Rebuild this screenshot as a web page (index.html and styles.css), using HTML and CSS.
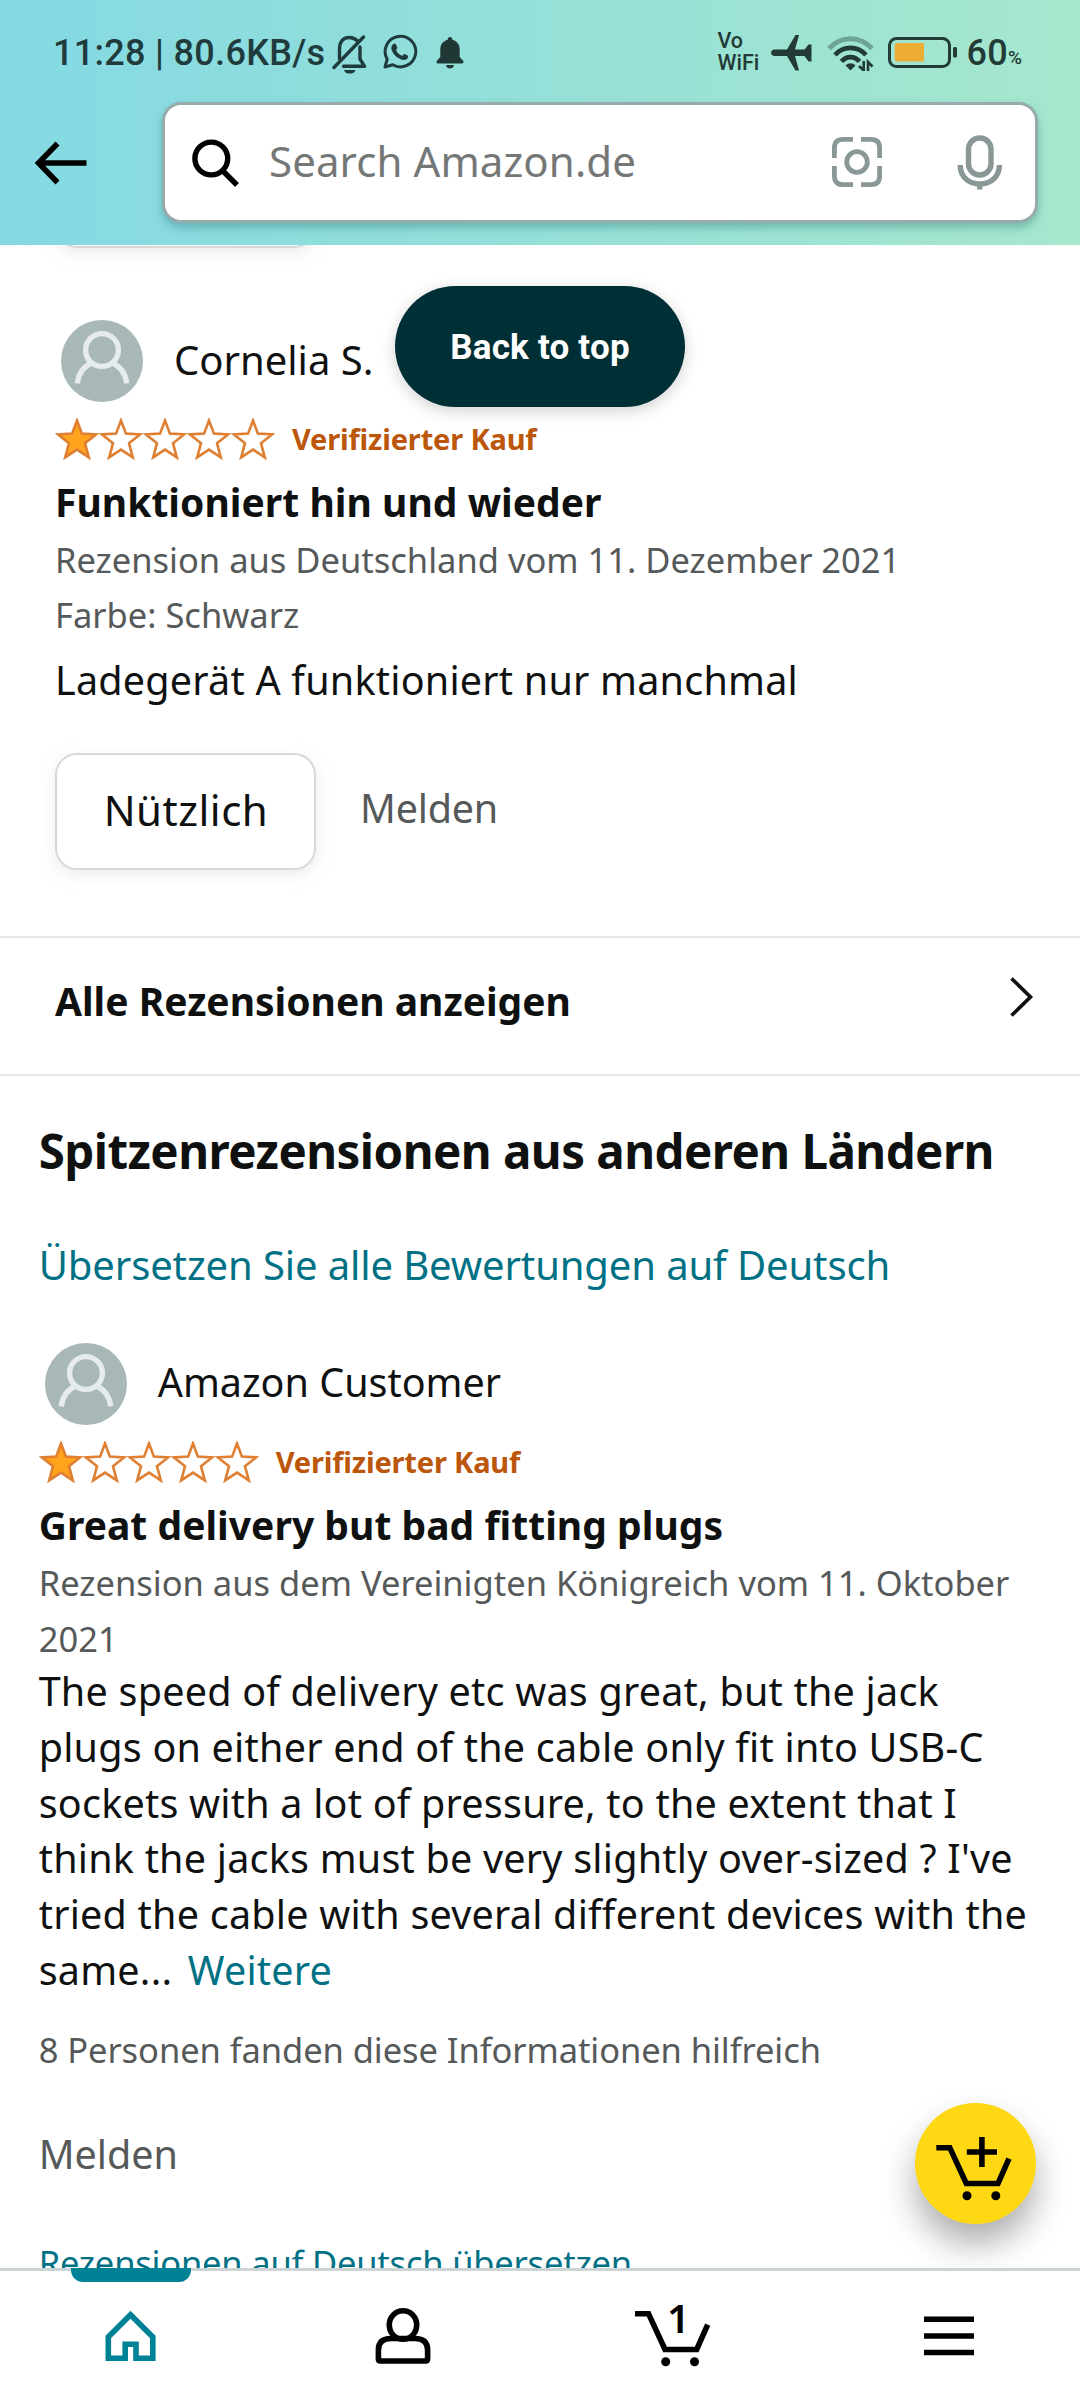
FILE: index.html
```
<!DOCTYPE html>
<html lang="de">
<head>
<meta charset="utf-8">
<title>Rezensionen</title>
<link rel="stylesheet" href="styles.css">
</head>
<body>
<svg class="defs" width="0" height="0" aria-hidden="true">
  <symbol id="avatar" viewBox="0 0 82 82">
    <circle cx="41" cy="41" r="41" fill="#a8b7b7"/>
    <g fill="none" stroke="#e6ecec" stroke-width="5.4">
      <circle cx="41" cy="30" r="16.4"/>
      <path d="M16.3 63.3C17.5 54 22.5 46.500 30.500 43M65.700 63.300C64.500 54 59.500 46.500 51.500 43"/>
    </g>
  </symbol>
  <symbol id="star" viewBox="0 0 44 42">
    <path d="M22 2.500L26.900 15.600L41 16.400L30 25.200L33.800 39.400L22 31.600L10.200 39.400L14 25.200L3 16.400L17.100 15.600Z" stroke="#de7f32" stroke-width="2.600"/>
  </symbol>
  <symbol id="cart" viewBox="0 0 121 121">
    <path d="M21.300 44.700H34.800L51.300 80.500H83L94 55.700" fill="none" stroke="#000" stroke-width="5.600"/>
    <circle cx="52" cy="92.700" r="4.500"/><circle cx="80.800" cy="92.700" r="4.500"/>
  </symbol>
</svg>

<div class="screen">
  <header class="header">
    <div class="status">
      <span class="status-text">11:28 | 80.6KB/s</span>
      <svg class="i-mute" width="36" height="40" viewBox="0 0 36 40" fill="none" stroke="#1f3b3c" stroke-width="3.400">
        <path d="M7.500 22V15C7.500 7 12 3.500 17.500 3.500C20.500 3.500 23 4.500 25 6.500M28 13V25L32.500 32.300H11.500M31.500 3L2 33.500M7.500 18V25" stroke-linecap="round" stroke-linejoin="round"/>
        <path d="M12 36H23.500C22.500 39 20 39.500 17.800 39.500S13 39 12 36Z" fill="#1f3b3c" stroke="none"/>
      </svg>
      <svg class="i-wa" width="36" height="36" viewBox="0 0 36 36">
        <path d="M3 33L5.200 25.200A15.300 15.300 0 1 1 10.800 30.800Z" fill="none" stroke="#1f3b3c" stroke-width="3" stroke-linejoin="round"/>
        <path d="M11.500 10C13 9 14 10 14.500 11.500L15.300 13.700C15.300 15 13.800 15.600 14.200 16.500C15.500 19 17.300 20.700 20 21.700C21 22 21.600 19.800 22.800 20L26 21.800C26.700 23.500 25 25.800 22.500 26C16 26 9.500 19 9.300 14C9.300 12 10.200 10.700 11.500 10Z" fill="#1f3b3c"/>
      </svg>
      <svg class="i-bell" width="28" height="32" viewBox="0 0 28 32" fill="#1f3735">
        <path d="M14 0C15.500 0 16.300 1 16.300 2.700C21 4 23.700 7.500 23.700 12.500V20L27.300 24C28 25.500 27 26.500 26 26.500H2C1 26.500 0 25.500 .7 24L4.300 20V12.500C4.300 7.500 7 4 11.700 2.700C11.700 1 12.500 0 14 0ZM10 28H18C17.700 30.500 16 31.500 14 31.500S10.300 30.500 10 28Z"/>
      </svg>
      <span class="spacer"></span>
      <span class="vowifi"><span>Vo</span><span>WiFi</span></span>
      <svg class="i-plane" width="41" height="38" viewBox="0 0 41 38" fill="#223b36">
        <path d="M3 15.500H16L24.500 1H28L24 15.500H33.500L37.500 10.500H40.500V27.500H37.500L33.500 22H24L28 36.500H24.500L16 22H3C-1 21.500-1 16 3 15.500Z"/>
      </svg>
      <svg class="i-wifi" width="47" height="36" viewBox="0 0 47 36" fill="none" stroke="#223b36" stroke-width="4.800">
        <path d="M2 13.500C14 .5 33 .5 45 13.500" stroke="#6fa596"/>
        <path d="M8 20C16.500 10.500 30.500 10.500 39 20M14.500 26.500C19.500 20.700 27.500 20.700 32.500 26.500"/>
        <path d="M18.500 30.500C21.500 27.500 25.500 27.500 28.500 30.500L23.500 35.500Z" fill="#223b36" stroke="none"/>
        <path d="M36.700 26V35.500L32 31M41 36V27L45.500 31.500" stroke-width="2.600"/>
      </svg>
      <svg class="i-battery" width="70" height="31" viewBox="0 0 70 31">
        <rect x="1.500" y="1.500" width="60" height="28" rx="7" fill="none" stroke="#223b36" stroke-width="3"/>
        <path d="M9.500 6H36V24.500H9.500Q6.700 24.500 6.700 22V8.500Q6.700 6 9.500 6Z" fill="#edad34"/>
        <rect x="65" y="10" width="4" height="10.500" rx="1.500" fill="#223b36"/>
      </svg>
      <span class="pct-num">60</span><span class="pct-sign">%</span>
    </div>
    <div class="search-row">
      <svg class="i-back" width="54" height="44" viewBox="0 0 54 44" fill="none" stroke="#000" stroke-width="5.500">
        <path d="M52.500 22H5M23.500 2.500L4.500 22L23.500 41.500"/>
      </svg>
      <div class="search-box">
        <svg width="48" height="48" viewBox="0 0 48 48" fill="none" stroke="#000" stroke-width="5.400">
          <circle cx="19.300" cy="19.500" r="16.400"/><path d="M31 32L45 46"/>
        </svg>
        <span class="placeholder">Search Amazon.de</span>
        <svg class="i-cam" width="50" height="50" viewBox="0 0 50 50" fill="none" stroke="#8a9797" stroke-width="4.800">
          <path d="M2.400 21V11Q2.400 2.400 11 2.400H21M29 2.400H39Q47.600 2.400 47.600 11V21M47.600 29V39Q47.600 47.600 39 47.600H29M21 47.600H11Q2.400 47.600 2.400 39V29"/>
          <circle cx="25" cy="25" r="10.300"/>
        </svg>
        <svg class="i-mic" width="46" height="55" viewBox="0 0 46 55" fill="none" stroke="#8a9797" stroke-width="5.400">
          <rect x="11.500" y="3" width="22.500" height="37" rx="11.200"/>
          <path d="M3.200 30C3.200 42 12 49 22.800 49S42.400 42 42.400 30M22.800 49V54.500"/>
        </svg>
      </div>
    </div>
  </header>

  <main class="content">
    <div class="button prev-button"></div>
    <article class="review local">
      <div class="profile"><svg width="82" height="82"><use href="#avatar"/></svg><span>Cornelia S.</span></div>
      <div class="rating">
        <svg width="220" height="42" fill="none"><use href="#star" x="0" width="44" height="42" fill="#ffa41c"/><use href="#star" x="44" width="44" height="42"/><use href="#star" x="88" width="44" height="42"/><use href="#star" x="132" width="44" height="42"/><use href="#star" x="176" width="44" height="42"/></svg>
        <b class="verified">Verifizierter Kauf</b>
      </div>
      <h3 class="title">Funktioniert hin und wieder</h3>
      <p class="meta">Rezension aus Deutschland vom 11. Dezember 2021</p>
      <p class="meta color-line">Farbe: Schwarz</p>
      <p class="body short">Ladegerät A funktioniert nur manchmal</p>
      <div class="actions"><div class="button">Nützlich</div><span class="report">Melden</span></div>
    </article>

    <div class="all-link">
      <b>Alle Rezensionen anzeigen</b>
      <svg width="24" height="40" viewBox="0 0 24 40" fill="none" stroke="#0f1111" stroke-width="3.600"><path d="M1.500 1.500L20.500 20L1.500 38.500"/></svg>
    </div>

    <section class="foreign">
      <h2>Spitzenrezensionen aus anderen Ländern</h2>
      <a class="translate-all">Übersetzen Sie alle Bewertungen auf Deutsch</a>
      <article class="review">
        <div class="profile"><svg width="82" height="82"><use href="#avatar"/></svg><span class="customer">Amazon Customer</span></div>
        <div class="rating">
          <svg width="220" height="42" fill="none"><use href="#star" x="0" width="44" height="42" fill="#ffa41c"/><use href="#star" x="44" width="44" height="42"/><use href="#star" x="88" width="44" height="42"/><use href="#star" x="132" width="44" height="42"/><use href="#star" x="176" width="44" height="42"/></svg>
          <b class="verified">Verifizierter Kauf</b>
        </div>
        <h3 class="title">Great delivery but bad fitting plugs</h3>
        <p class="meta">Rezension aus dem Vereinigten Königreich vom 11. Oktober<br>2021</p>
        <p class="body">The speed of delivery etc was great, but the jack<br>plugs on either end of the cable only fit into USB-C<br>sockets with a lot of pressure, to the extent that I<br>think the jacks must be very slightly over-sized ? I've<br>tried the cable with several different devices with the<br>same... <a class="more">Weitere</a></p>
        <p class="helpful">8 Personen fanden diese Informationen hilfreich</p>
        <p class="report-line">Melden</p>
        <a class="translate">Rezensionen auf Deutsch übersetzen</a>
      </article>
    </section>
  </main>

  <nav class="tabs">
    <div class="tab active">
      <svg width="120" height="132" viewBox="0 0 120 132" fill="none" stroke="#008296" stroke-width="5.600">
        <path d="M59.500 46.800L37.300 69V90.200H54.200V76.200H65V90.200H81.800V69Z"/>
      </svg>
    </div>
    <div class="tab">
      <svg width="120" height="132" viewBox="0 0 120 132" fill="none" stroke="#000" stroke-width="5.600">
        <ellipse cx="59" cy="57" rx="13.700" ry="14.300"/>
        <path d="M47 70.500H71Q83.600 70.500 83.600 82V91Q83.600 93 81.600 93H36.400Q34.400 93 34.400 91V82Q34.400 70.500 47 70.500Z"/>
      </svg>
    </div>
    <div class="tab">
      <svg width="120" height="132" viewBox="0 0 120 132"><use href="#cart" x="-2.300" y="1" width="121" height="121"/></svg>
      <b class="cart-count">1</b>
    </div>
    <div class="tab">
      <svg width="120" height="132" viewBox="0 0 120 132" stroke="#000" stroke-width="5.600"><path d="M35 51.300H85M35 68H85M35 84.500H85"/></svg>
    </div>
  </nav>

  <div class="to-top">Back to top</div>
  <div class="fab">
    <svg width="121" height="121" viewBox="0 0 121 121"><use href="#cart" width="121" height="121"/><path d="M51.800 49H82M66.900 34V64" stroke="#000" stroke-width="5.600"/></svg>
  </div>
</div>
</body>
</html>
```
FILE: styles.css
```
* { box-sizing: border-box; }
body, p, h2, h3 { margin: 0; }
svg { display: block; flex: none; }
.defs { position: absolute; }

.screen {
  position: relative;
  display: flex;
  flex-direction: column;
  width: 1080px;
  height: 2400px;
  overflow: hidden;
  background: #fff;
  color: #0f1111;
  font-family: "Noto Sans", sans-serif;
  font-size: 39px;
  white-space: nowrap;
}

/* header */
.header {
  flex: none;
  height: 245px;
  background: linear-gradient(to right, #84d9e3, #a6e7cd);
}
.status {
  display: flex;
  align-items: flex-start;
  height: 102px;
  padding: 34px 58px 0 53px;
  font-family: Roboto, sans-serif;
  font-weight: 500;
  font-size: 36px;
  line-height: 38px;
  color: #1f3b3c;
}
.status-text { width: 279px; letter-spacing: 0.3px; }
.i-wa { margin: 0 0 0 14px; }
.i-bell { margin: 3px 0 0 18px; }
.spacer { flex: 1; }
.vowifi {
  display: flex;
  flex-direction: column;
  width: 54px;
  margin-top: -4px;
  font-size: 21.500px;
  font-weight: 500;
  line-height: 21.500px;
  color: #223b36;
}
.i-wifi { margin: 1px 0 0 15px; }
.i-battery { margin: 3px 0 0 14px; }
.pct-num { margin-left: 8px; color: #223b36; letter-spacing: 0.3px; }
.pct-sign { width: 14px; margin: 5px 0 0 0; font-size: 19px; color: #223b36; }

.search-row { display: flex; align-items: center; height: 121px; padding: 0 42px 0 34px; }
.i-back { margin-right: 74px; }
.search-box {
  flex: 1;
  display: flex;
  align-items: center;
  height: 121px;
  padding: 0 32.500px 0 27px;
  border: 3px solid #97abad;
  border-radius: 19px;
  background: #fff;
  box-shadow: 0 5px 9px rgba(30, 110, 110, 0.35);
}
.placeholder {
  flex: 1;
  margin-left: 29px;
  padding-bottom: 4px;
  font-size: 42px;
  letter-spacing: 0.1px;
  color: #757777;
}
.i-cam { margin-bottom: 1px; }
.i-mic { margin-left: 74.500px; }

/* content */
.content { flex: 1; min-height: 0; overflow: hidden; }
.button {
  width: 261px;
  height: 117px;
  padding: 0 0 4px 1px;
  border: 2px solid #d5d9d9;
  border-radius: 22px;
  background: #fff;
  box-shadow: 0 5px 14px rgba(213, 217, 217, 0.5);
  font-size: 42px;
  line-height: 110px;
  letter-spacing: 0.5px;
  text-align: center;
}
.prev-button { margin: -114px 0 0 55px; }

.local { padding: 72px 0 0 55px; }
.profile { display: flex; align-items: center; gap: 31px; height: 82px; margin-left: 6px; font-size: 40px; }
.profile span { padding-bottom: 4px; }
.rating { display: flex; align-items: center; height: 42px; margin-top: 16px; }
.profile .customer { font-size: 39.500px; }
.verified { margin-left: 17px; font-size: 29px; line-height: 42px; letter-spacing: -0.17px; color: #bc560a; }
.title { margin-top: 15px; font-size: 39px; line-height: 54px; letter-spacing: 0.03px; }
.meta { margin-top: 3px; font-size: 34.500px; line-height: 56px; color: #565959; }
.color-line { margin-top: -1px; }
.short { margin-top: 9px; line-height: 56px; }
.body { font-size: 39.500px; letter-spacing: 0.22px; }
.actions { display: flex; align-items: center; margin-top: 45px; gap: 44px; }
.report { padding-bottom: 8px; font-size: 39.500px; letter-spacing: -0.2px; color: #565959; }

.all-link {
  display: flex;
  align-items: center;
  justify-content: space-between;
  height: 140px;
  margin-top: 66px;
  padding: 0 46px 11px 55px;
  border: solid #e7e7e7;
  border-width: 2px 0;
  font-size: 39px;
}
.all-link svg { margin-top: -7px; }

.foreign { padding: 42px 0 0 38.700px; }
h2 { font-size: 47.500px; line-height: 66px; letter-spacing: -0.55px; }
.translate-all { display: block; margin-top: 53px; font-size: 40px; line-height: 56px; letter-spacing: -0.12px; color: #007185; }
.foreign .profile { margin-top: 50px; }
.foreign .body { margin-top: -3px; line-height: 55.800px; }
.more { margin-left: 5px; color: #007185; }
.helpful { margin-top: 25px; font-size: 34.500px; line-height: 52px; letter-spacing: -0.07px; color: #565959; }
.report-line { margin-top: 50px; font-size: 39.500px; line-height: 56px; color: #565959; }
.translate { display: block; margin-top: 53px; font-size: 34.500px; line-height: 56px; letter-spacing: -0.2px; color: #007185; }

/* bottom navigation */
.tabs {
  flex: none;
  display: flex;
  justify-content: space-between;
  height: 132px;
  padding: 0 71.500px 0 71px;
  background: linear-gradient(#cdd4d6 3px, #fff 3px);
}
.tab { position: relative; width: 120px; }
.active::before {
  content: "";
  position: absolute;
  inset: 0 0 auto;
  height: 14px;
  border-radius: 0 0 12px 12px;
  background: #008296;
}
.cart-count { position: absolute; left: 51px; top: 23px; width: 24px; font-size: 40px; font-weight: 600; line-height: 54px; color: #000; }

/* floating controls */
.to-top {
  position: absolute;
  left: 395px;
  top: 286px;
  width: 290px;
  height: 121px;
  border-radius: 61px;
  background: #012f36;
  box-shadow: 0 4px 16px rgba(0, 0, 0, 0.18);
  font: 700 35px/124px Roboto, sans-serif;
  letter-spacing: 0.2px;
  text-align: center;
  color: #fff;
}
.fab {
  position: absolute;
  left: 915px;
  top: 2102.500px;
  width: 121px;
  height: 121px;
  border-radius: 50%;
  background: #ffd814;
  clip-path: inset(-20px -50px -44px -50px);
  box-shadow: 0 20px 34px rgba(0, 0, 0, 0.32);
}
```
